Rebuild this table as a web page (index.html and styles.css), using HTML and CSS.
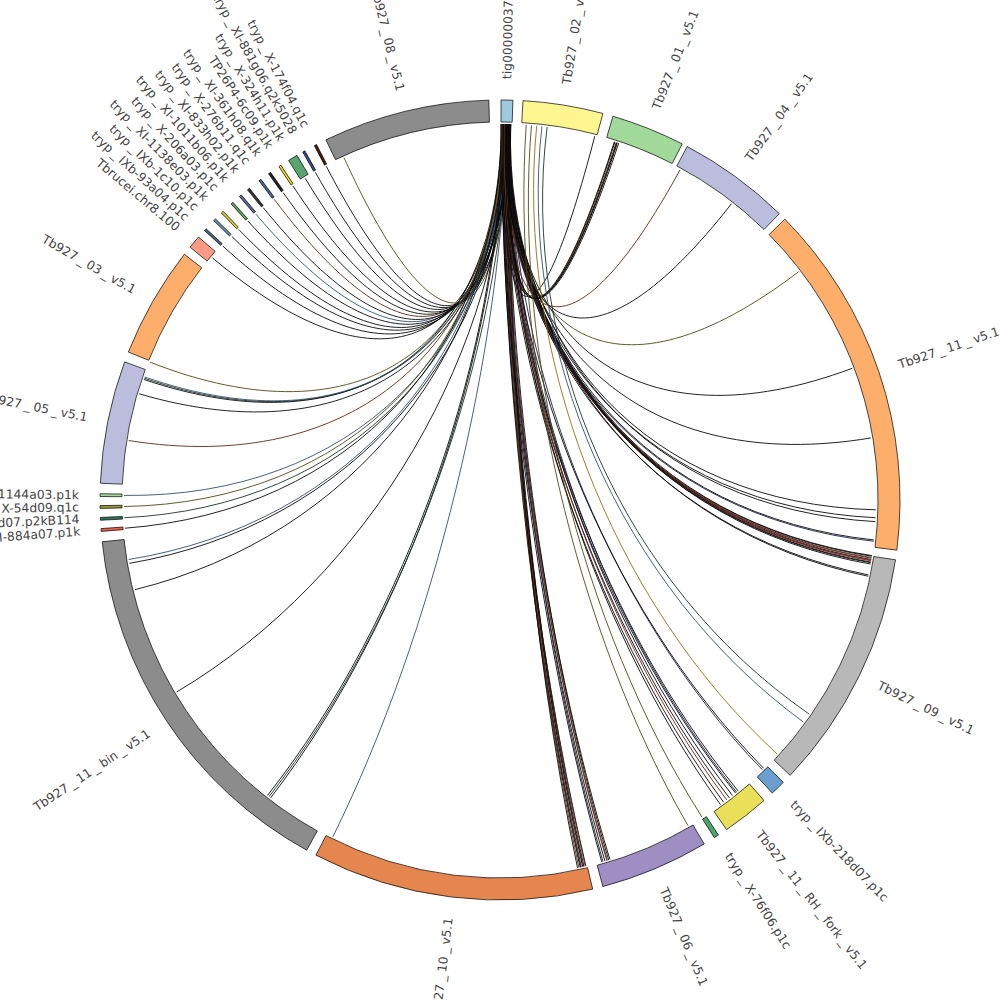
FILE: index.html
```html
<!DOCTYPE html>
<html lang="en">
<head>
<meta charset="utf-8">
<title>Circos contig links</title>
<link rel="stylesheet" href="styles.css">
</head>
<body>
<main class="stage">
  <svg id="chart" class="chart" xmlns="http://www.w3.org/2000/svg" viewBox="0 0 1000 1000" width="1000" height="1000">
    <g id="links" class="links"></g>
    <g id="ideos" class="ideos"></g>
    <g id="labels" class="labels"></g>
  </svg>
</main>
<script src="script.js"></script>
</body>
</html>
```

FILE: styles.css
```css
html, body {
  margin: 0;
  padding: 0;
  background: #ffffff;
}
.stage {
  width: 1000px;
  height: 1000px;
  overflow: hidden;
}
.chart {
  display: block;
  width: 1000px;
  height: 1000px;
}
.ideo {
  stroke: #000000;
  stroke-width: 0.7;
  stroke-linejoin: miter;
}
.link {
  fill: none;
  stroke-width: 0.9;
}
.label {
  font-family: "DejaVu Sans", "Liberation Sans", sans-serif;
  font-size: 12.3px;
  fill: #454545;
  dominant-baseline: central;
}
```

FILE: script.js
```js
(function () {
  var NS = "http://www.w3.org/2000/svg";
  var CX = 500, CY = 500, RIN = 378, ROUT = 400, RLINK = 376, RLAB = 421;

  function pt(r, a) {
    var t = a * Math.PI / 180;
    return [CX + r * Math.sin(t), CY - r * Math.cos(t)];
  }
  function f(n) { return n.toFixed(2); }

  // name, start angle, end angle, fill, label angle (optional)
  var ideos = [
    ["tig00000037", 0.15, 1.85, "#9ecae1"],
    ["Tb927_02_v5.1", 3.3, 14.9, "#fff68f"],
    ["Tb927_01_v5.1", 16.4, 27.1, "#a1d99b"],
    ["Tb927_04_v5.1", 27.9, 44.3, "#bcbddc"],
    ["Tb927_11_v5.1", 45.4, 97.2, "#fdae6b"],
    ["Tb927_09_v5.1", 98.6, 133.5, "#b8b8b8"],
    ["tryp_IXb-218d07.p1c", 134.9, 137.1, "#6a9fcf"],
    ["Tb927_11_RH_fork_v5.1", 138.7, 145.5, "#e9df58"],
    ["tryp_X-76f06.p1c", 146.9, 147.6, "#4ea36c"],
    ["Tb927_06_v5.1", 149.3, 165.1, "#9e8ec3"],
    ["Tb927_10_v5.1", 166.6, 207.4, "#e6864f"],
    ["Tb927_11_bin_v5.1", 208.9, 264.0, "#8c8c8c"],
    ["tryp_XI-884a07.p1k", 265.5, 265.9, "#e8604a", 265.7],
    ["tryp_IXb-218d07.p2kB114", 267.1, 267.5, "#2f6f5a", 267.35],
    ["tryp_X-54d09.q1c", 268.8, 269.2, "#9a9a3a", 269.0],
    ["tryp_XI-1144a03.p1k", 270.5, 270.9, "#a1d99b", 270.65],
    ["Tb927_05_v5.1", 272.4, 290.2, "#bcbddc"],
    ["Tb927_03_v5.1", 291.7, 307.9, "#fdae6b"],
    ["Tbrucei.chr8.100", 309.2, 311.1, "#fc9a84", 310.1],
    ["tryp_IXb-93a04.p1c", 312.35, 312.7, "#4c5f7e", 311.97],
    ["tryp_IXb-1c10.p1c", 314.3, 314.65, "#5f90b0", 313.83],
    ["tryp_XI-1138e03.p1k", 315.85, 316.2, "#d8c83a", 315.7],
    ["tryp_X-206a03.p1c", 317.75, 318.1, "#58a458", 317.57],
    ["tryp_XI-1011b06.p1k", 319.35, 319.7, "#6060a0", 319.43],
    ["tryp_XI-833h02.p1k", 320.85, 321.2, "#333333", 321.3],
    ["tryp_X-276b11.q1c", 322.95, 323.3, "#4a6888", 323.17],
    ["tryp_XI-361h08.q1k", 324.65, 325.0, "#222222", 325.03],
    ["TP26P4-6c09.p1k", 326.45, 326.8, "#f0d020", 326.9],
    ["tryp_X-324h11.p1k", 328.1, 329.5, "#5aa46e", 328.77],
    ["tryp_XI-881g06.q2k5028", 330.45, 330.8, "#3a4a90", 330.63],
    ["tryp_X-174f04.q1c", 332.35, 332.7, "#4a1a0a", 332.5],
    ["Tb927_08_v5.1", 334.2, 358.4, "#8c8c8c"]
  ];

  var K = "#0a0a0a", BR = "#5e2a16", OL = "#4e4a14", SL = "#34506c",
      NV = "#1a2048", DG = "#1e3426", RD = "#7a1e1e", YL = "#8a7410";

  // links from tig00000037: [target angle, colour]
  var tigLinks = [
    [310.1, K], [312.5, K], [314.5, K], [316.0, K], [317.9, K], [319.5, SL],
    [321.0, K], [323.1, BR], [324.8, K], [326.6, K], [328.8, K], [330.6, K],
    [332.5, K], [335.5, OL],
    [291.5, OL], [288.9, DG], [288.7, K], [289.1, SL], [286.4, K], [279.1, BR],
    [270.7, SL], [269.0, OL], [267.3, DG], [265.7, K],
    [260.9, SL], [260.3, K], [256.2, K], [239.3, K], [217.6, K], [217.9, DG], [218.2, K],
    [206.4, SL],
    [166.8, K], [166.9, BR], [167.1, K], [167.2, BR], [167.3, K], [167.5, NV],
    [167.6, BR], [167.7, K], [167.9, BR], [168.1, K],
    [163.0, K], [163.2, K], [163.4, BR], [163.5, BR], [163.8, K], [164.1, NV], [164.3, K],
    [140.7, K], [141.0, NV], [141.2, K], [141.8, K], [142.4, K], [142.9, RD],
    [143.5, K], [144.1, K],
    [135.8, NV], [135.5, K],
    [98.5, K], [98.6, K], [98.8, BR], [98.9, BR], [99.1, K], [99.2, RD], [99.3, RD],
    [99.5, K], [99.6, K], [99.8, K], [101.5, K], [101.7, K],
    [96.3, NV], [96.1, K], [93.3, K], [92.7, K], [91.5, K], [80.5, K], [69.5, K], [52.6, OL],
    [38.0, K], [28.6, BR],
    [17.7, K], [17.8, K], [18.0, BR], [18.1, K], [18.2, K], [18.4, K],
    [14.6, K]
  ];
  // other links: [from, to, colour]
  var otherLinks = [
    [4.0, 150.0, OL], [4.8, 147.5, OL], [5.6, 132.5, YL], [6.4, 126.2, SL], [7.2, 124.7, DG]
  ];

  var linkG = document.getElementById("links");
  var ideoG = document.getElementById("ideos");
  var labG = document.getElementById("labels");

  function el(name, attrs) {
    var e = document.createElementNS(NS, name);
    for (var k in attrs) e.setAttribute(k, attrs[k]);
    return e;
  }

  function linkPath(a, b) {
    var k = 0.6;
    var p0 = pt(RLINK, a), p3 = pt(RLINK, b);
    var c1 = [p0[0] + k * (CX - p0[0]), p0[1] + k * (CY - p0[1])];
    var c2 = [p3[0] + k * (CX - p3[0]), p3[1] + k * (CY - p3[1])];
    return "M" + f(p0[0]) + " " + f(p0[1]) + " C" + f(c1[0]) + " " + f(c1[1]) + " " +
      f(c2[0]) + " " + f(c2[1]) + " " + f(p3[0]) + " " + f(p3[1]);
  }

  tigLinks.forEach(function (l, i) {
    var start = 0.2 + ((i * 7) % 16) * 0.095;
    linkG.appendChild(el("path", { "class": "link", d: linkPath(start, l[0]), stroke: l[1] }));
  });
  otherLinks.forEach(function (l) {
    linkG.appendChild(el("path", { "class": "link", d: linkPath(l[0], l[1]), stroke: l[2] }));
  });

  function sector(a1, a2) {
    var o1 = pt(ROUT, a1), o2 = pt(ROUT, a2), i2 = pt(RIN, a2), i1 = pt(RIN, a1);
    var large = (a2 - a1) > 180 ? 1 : 0;
    return "M" + f(o1[0]) + " " + f(o1[1]) +
      " A" + ROUT + " " + ROUT + " 0 " + large + " 1 " + f(o2[0]) + " " + f(o2[1]) +
      " L" + f(i2[0]) + " " + f(i2[1]) +
      " A" + RIN + " " + RIN + " 0 " + large + " 0 " + f(i1[0]) + " " + f(i1[1]) + " Z";
  }

  ideos.forEach(function (d) {
    ideoG.appendChild(el("path", { "class": "ideo", d: sector(d[1], d[2]), fill: d[3] }));

    var m = d.length > 4 ? d[4] : (d[1] + d[2]) / 2;
    var p = pt(RLAB, m);
    var right = m < 180;
    var rot = right ? m - 90 : m + 90;
    var t = el("text", {
      "class": "label",
      transform: "translate(" + f(p[0]) + " " + f(p[1]) + ") rotate(" + f(rot) + ")",
      "text-anchor": right ? "start" : "end"
    });
    var parts = d[0].split("_");
    parts.forEach(function (part, i) {
      if (i > 0) {
        var u = el("tspan", { dx: 3 });
        u.textContent = "_";
        t.appendChild(u);
      }
      var s = el("tspan", i > 0 ? { dx: 3 } : {});
      s.textContent = part;
      t.appendChild(s);
    });
    labG.appendChild(t);
  });
})();
```
